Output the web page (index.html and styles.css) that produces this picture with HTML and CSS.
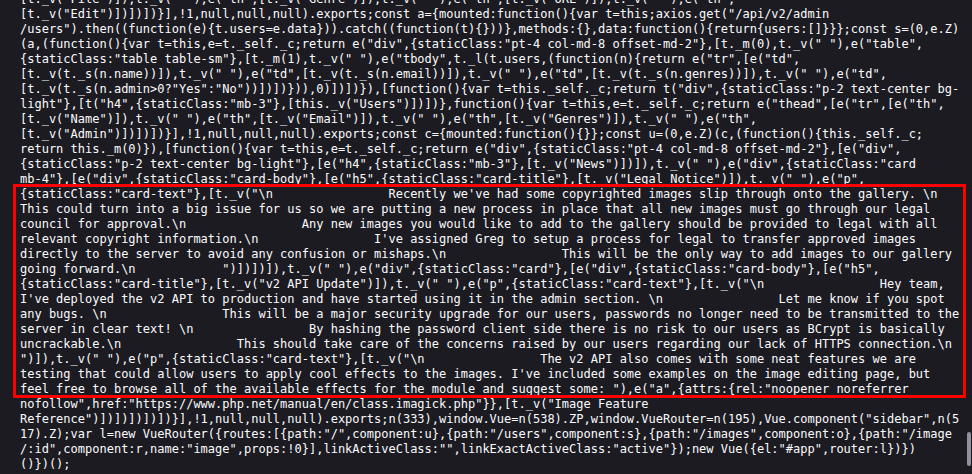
FILE: index.html
```html
<!DOCTYPE html>
<html lang="en">
<head>
<meta charset="utf-8">
<title>app.js</title>
<link rel="stylesheet" href="styles.css">
</head>
<body>
<div class="viewer">
<pre class="code">[t._v("File")]),t._v(" "),e("th",[t._v("Genre")]),t._v(" "),e("th",[t._v("URL")]),t._v(" "),e("th",
[t._v("Edit")])])])}],!1,null,null,null).exports;const a={mounted:function(){var t=this;axios.get("/api/v2/admin
/users").then((function(e){t.users=e.data})).catch((function(t){}))},methods:{},data:function(){return{users:[]}}};const s=(0,e.Z)
(a,(function(){var t=this,e=t._self._c;return e("div",{staticClass:"pt-4 col-md-8 offset-md-2"},[t._m(0),t._v(" "),e("table",
{staticClass:"table table-sm"},[t._m(1),t._v(" "),e("tbody",t._l(t.users,(function(n){return e("tr",[e("td",
[t._v(t._s(n.name))]),t._v(" "),e("td",[t._v(t._s(n.email))]),t._v(" "),e("td",[t._v(t._s(n.genres))]),t._v(" "),e("td",
[t._v(t._s(n.admin&gt;0?"Yes":"No"))])])})),0)])])}),[function(){var t=this._self._c;return t("div",{staticClass:"p-2 text-center bg-
light"},[t("h4",{staticClass:"mb-3"},[this._v("Users")])])},function(){var t=this,e=t._self._c;return e("thead",[e("tr",[e("th",
[t._v("Name")]),t._v(" "),e("th",[t._v("Email")]),t._v(" "),e("th",[t._v("Genres")]),t._v(" "),e("th",
[t._v("Admin")])])])}],!1,null,null,null).exports;const c={mounted:function(){}};const u=(0,e.Z)(c,(function(){this._self._c;
return this._m(0)}),[function(){var t=this,e=t._self._c;return e("div",{staticClass:"pt-4 col-md-8 offset-md-2"},[e("div",
{staticClass:"p-2 text-center bg-light"},[e("h4",{staticClass:"mb-3"},[t._v("News")])]),t._v(" "),e("div",{staticClass:"card
mb-4"},[e("div",{staticClass:"card-body"},[e("h5",{staticClass:"card-title"},[t._v("Legal Notice")]),t._v(" "),e("p",
{staticClass:"card-text"},[t._v("\n                Recently we've had some copyrighted images slip through onto the gallery. \n
This could turn into a big issue for us so we are putting a new process in place that all new images must go through our legal
council for approval.\n                Any new images you would like to add to the gallery should be provided to legal with all
relevant copyright information.\n                I've assigned Greg to setup a process for legal to transfer approved images
directly to the server to avoid any confusion or mishaps.\n                This will be the only way to add images to our gallery
going forward.\n            ")])])]),t._v(" "),e("div",{staticClass:"card"},[e("div",{staticClass:"card-body"},[e("h5",
{staticClass:"card-title"},[t._v("v2 API Update")]),t._v(" "),e("p",{staticClass:"card-text"},[t._v("\n                Hey team,
I've deployed the v2 API to production and have started using it in the admin section. \n                Let me know if you spot
any bugs. \n                This will be a major security upgrade for our users, passwords no longer need to be transmitted to the
server in clear text! \n                By hashing the password client side there is no risk to our users as BCrypt is basically
uncrackable.\n                This should take care of the concerns raised by our users regarding our lack of HTTPS connection.\n
")]),t._v(" "),e("p",{staticClass:"card-text"},[t._v("\n                The v2 API also comes with some neat features we are
testing that could allow users to apply cool effects to the images. I've included some examples on the image editing page, but
feel free to browse all of the available effects for the module and suggest some: "),e("a",{attrs:{rel:"noopener noreferrer
nofollow",href:"https://www.php.net/manual/en/class.imagick.php"}},[t._v("Image Feature
Reference")])])])])])}],!1,null,null,null).exports;n(333),window.Vue=n(538).ZP,window.VueRouter=n(195),Vue.component("sidebar",n(5
17).Z);var l=new VueRouter({routes:[{path:"/",component:u},{path:"/users",component:s},{path:"/images",component:o},{path:"/image
/:id",component:r,name:"image",props:!0}],linkActiveClass:"",linkExactActiveClass:"active"});new Vue({el:"#app",router:l})})
()})();
</pre>
<div class="highlight"></div>
<div class="scrollbar"><div class="thumb"></div></div>
</div>
</body>
</html>
```

FILE: styles.css
```css
html, body {
  margin: 0;
  padding: 0;
  height: 100%;
  overflow: hidden;
  background: #1c1b22;
}

.viewer {
  position: relative;
  height: 474px;
  overflow: hidden;
}

.code {
  margin: -8px 0 0;
  padding: 0 0 0 20px;
  font-family: "DejaVu Sans Mono", monospace;
  font-size: 12px;
  line-height: 15px;
  color: #fbfbfe;
  white-space: pre;
}

.highlight {
  position: absolute;
  left: 13px;
  top: 184px;
  width: 947px;
  height: 208px;
  border: 3px solid #ff0000;
}

.scrollbar {
  position: absolute;
  top: 0;
  right: 0;
  width: 7px;
  height: 100%;
}

.thumb {
  position: absolute;
  left: 2px;
  top: 432px;
  width: 4px;
  height: 34px;
  border-radius: 2px;
  background: #8f8f9d;
}
```
